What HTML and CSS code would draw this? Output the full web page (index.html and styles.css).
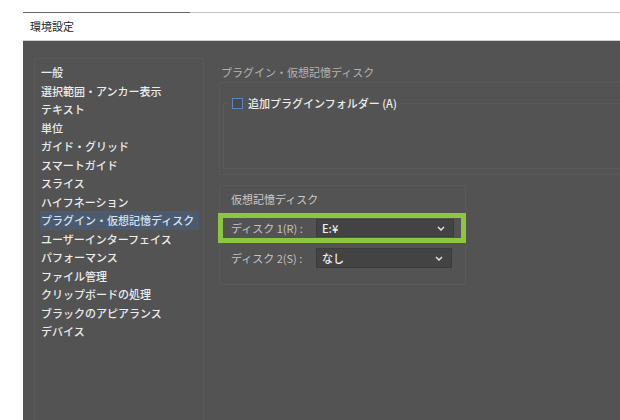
FILE: index.html
```html
<!DOCTYPE html>
<html>
  <head>
    <title>環境設定</title>
    <meta charset="utf-8">
    <link rel="stylesheet" href="styles.css">
  </head>
  <body>
    <div class="tabline"><span class="tabline-active"></span></div>
    <div class="title">環境設定</div>

    <main class="dialog">
      <ul class="sidebar">
        <li>一般</li>
        <li>選択範囲・アンカー表示</li>
        <li>テキスト</li>
        <li>単位</li>
        <li>ガイド・グリッド</li>
        <li>スマートガイド</li>
        <li>スライス</li>
        <li>ハイフネーション</li>
        <li class="selected">プラグイン・仮想記憶ディスク</li>
        <li>ユーザーインターフェイス</li>
        <li>パフォーマンス</li>
        <li>ファイル管理</li>
        <li>クリップボードの処理</li>
        <li>ブラックのアピアランス</li>
        <li>デバイス</li>
      </ul>

      <section class="content">
        <h1>プラグイン・仮想記憶ディスク</h1>

        <div class="plugin-box">
          <div class="fieldset">
            <label class="legend"><span class="checkbox"></span>追加プラグインフォルダー (A)</label>
          </div>
        </div>

        <div class="disk-box">
          <h2>仮想記憶ディスク</h2>
          <div class="disk-row marked">
            <span class="disk-label">ディスク 1(R) :</span>
            <div class="select wide">
              <span>E:¥</span>
              <svg width="8" height="5" viewBox="0 0 8 5"><path d="M1 1 L4 4 L7 1" fill="none" stroke="#e0e0e0" stroke-width="1.5"/></svg>
            </div>
          </div>
          <div class="disk-row">
            <span class="disk-label">ディスク 2(S) :</span>
            <div class="select">
              <span>なし</span>
              <svg width="8" height="5" viewBox="0 0 8 5"><path d="M1 1 L4 4 L7 1" fill="none" stroke="#e0e0e0" stroke-width="1.5"/></svg>
            </div>
          </div>
        </div>
      </section>
    </main>
  </body>
</html>
```

FILE: styles.css
```css
:root {
  --panel: #535353;
  --line: #5a5a5a;
  --text: #ececec;
  --text-dim: #b4b4b4;
  --green: #8cc63e;
}
html, body {
  margin: 0;
  background: #fff;
  font-family: "Noto Sans CJK JP", "Liberation Sans", sans-serif;
  font-size: 11px;
  overflow: hidden;
}
.tabline {
  margin: 12px 0 0 23px;
  height: 1px;
  background: #c4c4c4;
}
.tabline-active {
  display: block;
  width: 167px;
  height: 1px;
  background: #666;
}
.title {
  height: 27px;
  line-height: 27px;
  padding-left: 30px;
  color: #222;
}
.dialog {
  display: flex;
  margin-left: 23px;
  height: 380px;
  border-top: 1px solid #cfcfcf;
  background: var(--panel);
}
.sidebar {
  list-style: none;
  margin: 17px 0 0 11px;
  padding: 4px 0 0 5px;
  width: 163px;
  border: 1px solid var(--line);
  border-bottom: none;
  color: var(--text);
  font-weight: 500;
}
.sidebar li {
  height: 18.5px;
  line-height: 18.5px;
  padding-left: 1px;
  white-space: nowrap;
}
.sidebar li.selected {
  background: #4b5a6e;
  color: #d4e2f4;
  margin-right: 4px;
}
.content {
  flex: 1;
  margin-left: 15px;
  padding-top: 22px;
}
h1, h2 {
  margin: 0;
  font-size: 11px;
  font-weight: normal;
  line-height: 18px;
}
h1 {
  padding-left: 2px;
  color: var(--text-dim);
}
.plugin-box {
  margin-top: 1px;
  height: 93px;
  padding: 20px 0 0 3px;
  box-sizing: border-box;
  border: 1px solid var(--line);
  border-right: none;
}
.fieldset {
  height: 64px;
  border: 1px solid var(--line);
  border-right: none;
}
.legend {
  display: flex;
  align-items: center;
  gap: 5px;
  width: max-content;
  margin: -9px 0 0 5px;
  padding: 0 3px;
  height: 16px;
  background: var(--panel);
  color: var(--text);
  font-weight: 500;
}
.checkbox {
  width: 9px;
  height: 9px;
  border: 1px solid #5b86c0;
  background: #4a4a4a;
}
.disk-box {
  width: 247px;
  height: 100px;
  margin-top: 10px;
  padding-top: 4px;
  box-sizing: border-box;
  border: 1px solid var(--line);
}
h2 {
  padding-left: 11px;
  color: #cacaca;
}
.disk-row {
  display: flex;
  align-items: center;
  height: 20px;
  margin-top: 5px;
  padding-left: 11px;
  color: #c4c4c4;
}
.disk-row.marked {
  height: 30px;
  margin: 5px -1px 0 -2px;
  padding-left: 8px;
  box-sizing: border-box;
  border: 5px solid var(--green);
}
.disk-label {
  width: 85px;
  white-space: nowrap;
}
.select {
  display: flex;
  align-items: center;
  justify-content: space-between;
  box-sizing: border-box;
  width: 136px;
  height: 20px;
  padding: 0 8px 0 5px;
  background: #434343;
  border: 1px solid #3c3c3c;
  color: #f0f0f0;
  font-weight: 500;
}
.select.wide {
  width: 138px;
  height: 18px;
}
```
